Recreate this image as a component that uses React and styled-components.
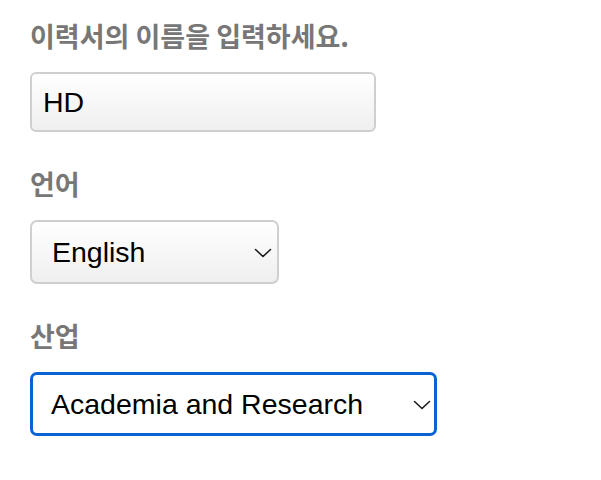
import React from "react";
import styled, { createGlobalStyle } from "styled-components";

const Global = createGlobalStyle`
  html, body { margin: 0; padding: 0; background: #fff; }
  body { font-family: "Liberation Sans", Arial, "Noto Sans CJK KR", sans-serif; }
`;

const Form = styled.form`
  display: flex;
  flex-direction: column;
  gap: 36px;
  padding: 20px 0 0 30px;
`;

const Field = styled.div`
  display: flex;
  flex-direction: column;
  align-items: flex-start;
  gap: 20px;
`;

const Label = styled.label`
  display: block;
  font-family: "Noto Sans CJK KR", "Noto Sans", sans-serif;
  font-weight: 700;
  font-size: 27px;
  line-height: 32px;
  height: 32px;
  color: #777;
  white-space: nowrap;
`;

const TextInput = styled.input`
  box-sizing: border-box;
  width: 346px;
  height: 60px;
  margin: 0;
  padding: 0 11px;
  border: 2px solid #cfcfcf;
  border-radius: 6px;
  background: linear-gradient(#ffffff, #efefef);
  font-family: "Liberation Sans", Arial, sans-serif;
  font-size: 28.5px;
  color: #000;
  outline: none;
`;

const SelectWrap = styled.div`
  position: relative;
  width: ${(p) => p.$width}px;
  height: 64px;
`;

const Select = styled.select`
  box-sizing: border-box;
  appearance: none;
  -webkit-appearance: none;
  width: 100%;
  height: 100%;
  margin: 0;
  padding: 0 40px 0 ${(p) => (p.$focused ? 18 : 20)}px;
  border: ${(p) => (p.$focused ? "3px solid #0a62d3" : "2px solid #cfcfcf")};
  border-radius: 7px;
  background: ${(p) => (p.$focused ? "#fff" : "linear-gradient(#ffffff, #efefef)")};
  font-family: "Liberation Sans", Arial, sans-serif;
  font-size: 28.5px;
  color: #000;
  outline: none;
`;

const Chevron = styled.svg`
  position: absolute;
  right: ${(p) => p.$right}px;
  top: 50%;
  margin-top: -4px;
  width: 18px;
  height: 10px;
  pointer-events: none;
`;

function ChevronIcon({ right }) {
  return (
    <Chevron $right={right} viewBox="0 0 18 10">
      <path d="M1.5 1.5 L9 8.5 L16.5 1.5" fill="none" stroke="#1a1a1a" strokeWidth="1.6" strokeLinecap="round" strokeLinejoin="round" />
    </Chevron>
  );
}

export default function App() {
  return (
    <>
      <Global />
      <Form onSubmit={(e) => e.preventDefault()}>
        <Field>
          <Label htmlFor="name">이력서의 이름을 입력하세요.</Label>
          <TextInput id="name" defaultValue="HD" />
        </Field>
        <Field>
          <Label htmlFor="lang">언어</Label>
          <SelectWrap $width={249}>
            <Select id="lang" defaultValue="English">
              <option>English</option>
              <option>한국어</option>
            </Select>
            <ChevronIcon right={7} />
          </SelectWrap>
        </Field>
        <Field>
          <Label htmlFor="industry">산업</Label>
          <SelectWrap $width={407}>
            <Select id="industry" $focused defaultValue="Academia and Research">
              <option>Academia and Research</option>
              <option>Technology</option>
            </Select>
            <ChevronIcon right={6} />
          </SelectWrap>
        </Field>
      </Form>
    </>
  );
}
